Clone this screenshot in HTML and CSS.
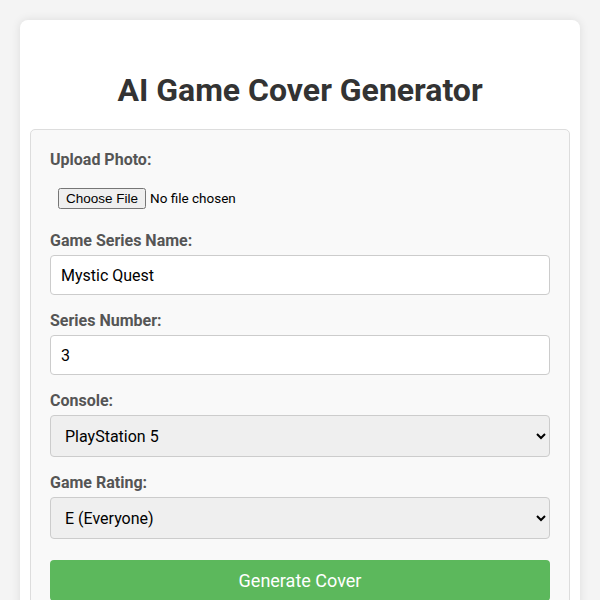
FILE: index.html
```html
<!DOCTYPE html>
<html>
<head>
<meta charset="utf-8">
<link rel="stylesheet" href="styles.css">
</head>
<body>
<div class="container">
  <h1 class="title">AI Game Cover Generator</h1>
  <form class="form-box">
    <div class="group">
      <label class="label">Upload Photo:</label>
      <input class="file" type="file">
    </div>
    <div class="group">
      <label class="label">Game Series Name:</label>
      <input class="field" type="text" value="Mystic Quest">
    </div>
    <div class="group">
      <label class="label">Series Number:</label>
      <input class="field" type="number" value="3">
    </div>
    <div class="group">
      <label class="label">Console:</label>
      <select class="field select">
        <option>PlayStation 5</option>
        <option>Xbox Series X</option>
        <option>Nintendo Switch</option>
      </select>
    </div>
    <div class="group">
      <label class="label">Game Rating:</label>
      <select class="field select">
        <option>E (Everyone)</option>
        <option>T (Teen)</option>
        <option>M (Mature)</option>
      </select>
    </div>
    <button class="btn" type="button">Generate Cover</button>
  </form>
</div>
</body>
</html>
```
FILE: styles.css
```css
html, body {
  margin: 0;
  padding: 0;
}
body {
  background: #f4f4f4;
  font-family: Roboto, "Liberation Sans", sans-serif;
  padding: 20px;
}
.container {
  background: #fff;
  border-radius: 8px;
  box-shadow: 0 0 10px rgba(0,0,0,0.1);
  padding: 30px 10px 20px;
}
.title {
  text-align: center;
  color: #333;
  font-size: 32px;
  font-weight: 700;
  margin: 22px 0 20px;
  line-height: 37px;
}
.form-box {
  background: #f9f9f9;
  border: 1px solid #ddd;
  border-radius: 5px;
  padding: 20px 19px;
}
.group {
  margin-bottom: 16px;
}
.label {
  display: block;
  font-weight: 700;
  color: #555;
  font-size: 16px;
  line-height: 19px;
  margin-bottom: 5px;
}
.file {
  display: block;
  padding: 14px 8px 6px;
  font-family: Roboto, "Liberation Sans", sans-serif;
  font-size: 13.5px;
  margin: 0;
}
.field {
  display: block;
  box-sizing: border-box;
  width: 100%;
  height: 40px;
  padding: 10px;
  border: 1px solid #ccc;
  border-radius: 4px;
  font-family: Roboto, "Liberation Sans", sans-serif;
  font-size: 16px;
  background: #fff;
  color: #000;
  margin: 0;
}
.select {
  background-color: #efefef;
  height: 42px;
}
.btn {
  display: block;
  width: 100%;
  margin-top: 21px;
  background: #5cb85c;
  color: #fff;
  border: none;
  border-radius: 4px;
  font-family: Roboto, "Liberation Sans", sans-serif;
  font-size: 18px;
  padding: 10px;
  line-height: 21px;
}
```
